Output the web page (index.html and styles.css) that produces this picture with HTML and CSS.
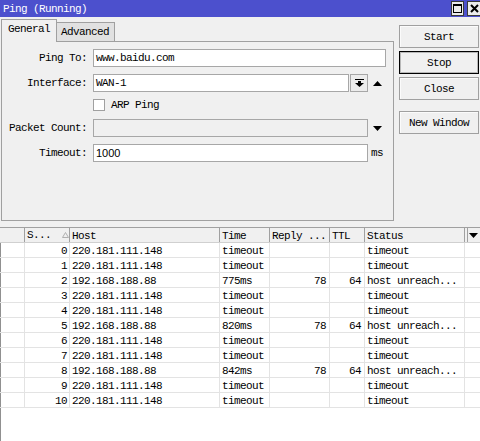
FILE: index.html
```html
<!DOCTYPE html>
<html>
<head>
<meta charset="utf-8">
<link rel="stylesheet" href="styles.css">
</head>
<body>
<div class="window">
  <div class="titlebar">
    <span class="title">Ping (Running)</span>
    <div class="tb-btns">
      <span class="tb-btn tb-max"><span class="max-icon"></span></span>
      <span class="tb-btn tb-close">
        <svg width="9" height="9" viewBox="0 0 9 9"><path d="M1 1 L8 8 M8 1 L1 8" stroke="#000" stroke-width="2"/></svg>
      </span>
    </div>
  </div>
  <div class="main">
    <div class="left">
      <div class="tabs">
        <div class="tab active">General</div>
        <div class="tab">Advanced</div>
      </div>
      <div class="panel">
        <div class="row r1">
          <label class="lbl">Ping To:</label>
          <div class="input w-ping">www.baidu.com</div>
        </div>
        <div class="row r2">
          <label class="lbl">Interface:</label>
          <div class="input w-iface">WAN-1</div>
          <div class="ddbtn">
            <svg width="9" height="8" viewBox="0 0 9 8"><rect x="0" y="0" width="9" height="1" fill="#000"/><rect x="3" y="2" width="3" height="2" fill="#000"/><path d="M0 4 H9 L4.5 8 Z" fill="#000"/></svg>
          </div>
          <svg class="tri" width="9" height="5" viewBox="0 0 9 5"><path d="M0 5 H9 L4.5 0 Z" fill="#000"/></svg>
        </div>
        <div class="row r3">
          <span class="lbl"></span>
          <span class="checkbox"></span>
          <span class="cb-label">ARP Ping</span>
        </div>
        <div class="row r4">
          <label class="lbl">Packet Count:</label>
          <div class="input disabled w-wide"></div>
          <svg class="tri" width="9" height="5" viewBox="0 0 9 5"><path d="M0 0 H9 L4.5 5 Z" fill="#000"/></svg>
        </div>
        <div class="row r5">
          <label class="lbl">Timeout:</label>
          <div class="input w-wide num">1000</div>
          <span class="unit">ms</span>
        </div>
      </div>
    </div>
    <div class="buttons">
      <div class="btn">Start</div>
      <div class="btn default">Stop</div>
      <div class="btn">Close</div>
      <div class="btn nw">New Window</div>
    </div>
  </div>
  <div class="table">
    <div class="thead grid">
      <div class="c first"></div>
      <div class="c seq-h">S...<svg class="sort" width="7" height="6" viewBox="0 0 7 6"><path d="M0.5 5.5 H6.5 L3.5 0.5 Z" fill="none" stroke="#b0b0b0"/></svg></div>
      <div class="c">Host</div>
      <div class="c">Time</div>
      <div class="c">Reply ...</div>
      <div class="c">TTL</div>
      <div class="c">Status</div>
      <div class="c last-h"><svg width="9" height="5" viewBox="0 0 9 5"><path d="M0 0 H9 L4.5 5 Z" fill="#000"/></svg></div>
    </div>
    <div class="tbody">
      <div class="grid tr"><div class="c first"></div><div class="c r">0</div><div class="c">220.181.111.148</div><div class="c">timeout</div><div class="c r"></div><div class="c r"></div><div class="c">timeout</div><div class="c"></div></div>
      <div class="grid tr"><div class="c first"></div><div class="c r">1</div><div class="c">220.181.111.148</div><div class="c">timeout</div><div class="c r"></div><div class="c r"></div><div class="c">timeout</div><div class="c"></div></div>
      <div class="grid tr"><div class="c first"></div><div class="c r">2</div><div class="c">192.168.188.88</div><div class="c">775ms</div><div class="c r">78</div><div class="c r">64</div><div class="c">host unreach...</div><div class="c"></div></div>
      <div class="grid tr"><div class="c first"></div><div class="c r">3</div><div class="c">220.181.111.148</div><div class="c">timeout</div><div class="c r"></div><div class="c r"></div><div class="c">timeout</div><div class="c"></div></div>
      <div class="grid tr"><div class="c first"></div><div class="c r">4</div><div class="c">220.181.111.148</div><div class="c">timeout</div><div class="c r"></div><div class="c r"></div><div class="c">timeout</div><div class="c"></div></div>
      <div class="grid tr"><div class="c first"></div><div class="c r">5</div><div class="c">192.168.188.88</div><div class="c">820ms</div><div class="c r">78</div><div class="c r">64</div><div class="c">host unreach...</div><div class="c"></div></div>
      <div class="grid tr"><div class="c first"></div><div class="c r">6</div><div class="c">220.181.111.148</div><div class="c">timeout</div><div class="c r"></div><div class="c r"></div><div class="c">timeout</div><div class="c"></div></div>
      <div class="grid tr"><div class="c first"></div><div class="c r">7</div><div class="c">220.181.111.148</div><div class="c">timeout</div><div class="c r"></div><div class="c r"></div><div class="c">timeout</div><div class="c"></div></div>
      <div class="grid tr"><div class="c first"></div><div class="c r">8</div><div class="c">192.168.188.88</div><div class="c">842ms</div><div class="c r">78</div><div class="c r">64</div><div class="c">host unreach...</div><div class="c"></div></div>
      <div class="grid tr"><div class="c first"></div><div class="c r">9</div><div class="c">220.181.111.148</div><div class="c">timeout</div><div class="c r"></div><div class="c r"></div><div class="c">timeout</div><div class="c"></div></div>
      <div class="grid tr"><div class="c first"></div><div class="c r">10</div><div class="c">220.181.111.148</div><div class="c">timeout</div><div class="c r"></div><div class="c r"></div><div class="c">timeout</div><div class="c"></div></div>
    </div>
  </div>
</div>
</body>
</html>
```

FILE: styles.css
```css
* { box-sizing: border-box; }
html, body { margin: 0; padding: 0; }
body {
  width: 480px;
  height: 441px;
  overflow: hidden;
  background: #f0f0f0;
  font-family: "Liberation Mono", "DejaVu Sans Mono", monospace;
  font-size: 11px;
  letter-spacing: -0.6px;
  color: #000;
}
.window { width: 480px; height: 441px; display: flex; flex-direction: column; }

.titlebar {
  height: 17px;
  background: #4c50cd;
  color: #fff;
  display: flex;
  justify-content: space-between;
  align-items: flex-start;
  padding-left: 3px;
  line-height: 18px;
}
.title { color: #fff; }
.tb-btns { display: flex; gap: 3px; padding-top: 1px; }
.tb-btn {
  width: 13px;
  height: 15px;
  background: #ececec;
  border: 1px solid #3a3a3a;
  display: flex;
  align-items: center;
  justify-content: center;
}
.tb-close { width: 13px; border-right: none; }
.max-icon {
  width: 9px;
  height: 9px;
  border: 1px solid #000;
  border-top-width: 2px;
}

.main { display: flex; height: 204px; }
.left { width: 394px; display: flex; flex-direction: column; }
.tabs {
  height: 24px;
  display: flex;
  align-items: flex-end;
  padding-left: 1px;
}
.tab {
  height: 19px;
  width: 58px;
  border: 1px solid #a0a0a0;
  border-bottom: none;
  border-left: none;
  background: #e1e1e1;
  padding-left: 4px;
  line-height: 19px;
}
.tab.active {
  height: 23px;
  width: 56px;
  margin-bottom: -1px;
  border-left: 1px solid #a0a0a0;
  background: #f0f0f0;
  position: relative;
  z-index: 1;
  padding-left: 6px;
  line-height: 19px;
}
.panel {
  margin-left: 1px;
  width: 393px;
  height: 180px;
  border: 1px solid #a0a0a0;
  padding-left: 1px;
}
.row { display: flex; align-items: center; height: 18px; }
.r1 { margin-top: 7px; }
.r2 { margin-top: 7px; }
.r3 { margin-top: 7px; height: 12px; }
.r4 { margin-top: 8px; }
.r5 { margin-top: 7px; }
.lbl {
  width: 84px;
  text-align: right;
  margin-right: 6px;
  flex: none;
  line-height: 18px;
}
.input {
  height: 18px;
  border: 1px solid #a7a7a7;
  background: #fff;
  padding-left: 2px;
  line-height: 16px;
  white-space: nowrap;
}
.input.disabled { background: #f0f0f0; }
.w-ping { width: 293px; }
.w-iface { width: 256px; }
.w-wide { width: 275px; }
.num { font-family: "Liberation Sans", Arial, sans-serif; font-size: 11px; letter-spacing: 0; }
.ddbtn {
  margin-left: 1px;
  width: 18px;
  height: 18px;
  border: 1px solid #a7a7a7;
  background: #ececec;
  display: flex;
  align-items: center;
  justify-content: center;
}
.tri { margin-left: 5px; }
.checkbox {
  width: 12px;
  height: 12px;
  border: 1px solid #a0a0a0;
  background: #fff;
}
.cb-label { margin-left: 6px; }
.unit { margin-left: 3px; }

.buttons {
  margin-left: 5px;
  padding-top: 8px;
  display: flex;
  flex-direction: column;
  gap: 3px;
}
.btn {
  width: 80px;
  height: 23px;
  border: 1px solid #a0a0a0;
  box-shadow: inset 1px 1px 0 #fbfbfb;
  background: #f0f0f0;
  text-align: center;
  line-height: 22px;
}
.btn.default { border: 1px solid #000; box-shadow: inset 0 0 0 1px #b8b8b8; }
.btn.nw { margin-top: 8px; }

.table { margin-top: 6px; flex: 1; display: flex; flex-direction: column; }
.grid {
  display: grid;
  grid-template-columns: 24px 45px 150px 50px 60px 35px 100px 16px;
}
.thead {
  height: 16px;
  border-top: 1px solid #a0a0a0;
  border-bottom: 1px solid #d0d0d0;
  background: #f0f0f0;
}
.thead .c {
  height: 14px;
  border-left: 1px solid #a0a0a0;
  padding-left: 2px;
  line-height: 16px;
  white-space: nowrap;
  overflow: hidden;
}
.thead .c.first { border-left: none; }
.seq-h { display: flex; align-items: center; }
.sort { margin-left: 11px; }
.last-h {
  display: flex;
  align-items: center;
  padding-left: 4px !important;
  background: linear-gradient(to right, #f0f0f0 2px, #a0a0a0 2px, #a0a0a0 3px, #f0f0f0 3px);
}
.tbody {
  flex: 1;
  background: linear-gradient(to right, #909090 1px, #fff 1px);
}
.tr { height: 15px; border-bottom: 1px solid #e3e3e3; }
.tr .c {
  height: 14px;
  border-left: 1px solid #e3e3e3;
  padding-left: 2px;
  padding-right: 2px;
  line-height: 16px;
  white-space: nowrap;
  overflow: hidden;
}
.tr .c.first { border-left: none; }
.tr .c.r { text-align: right; padding-right: 3px; }
.tr .c.r:nth-child(2) { padding-right: 2px; }
```
